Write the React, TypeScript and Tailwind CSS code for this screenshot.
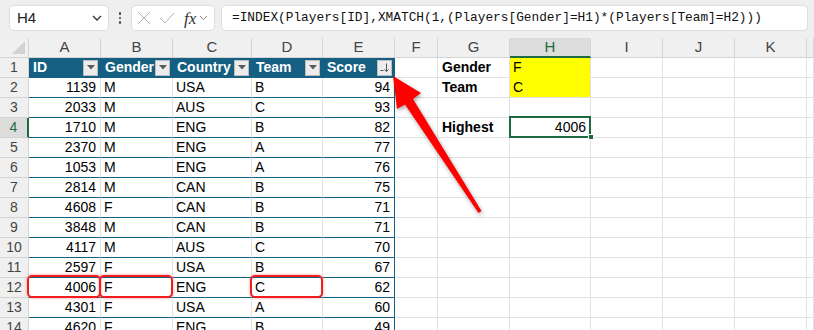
import React from "react";

const GRID =
  "grid grid-cols-[29px_72px_72px_79px_71px_72px_43px_72px_81px_72px_72px_72px_1fr] auto-rows-[20px]";

const letters = ["A", "B", "C", "D", "E", "F", "G", "H", "I", "J", "K", ""];
const headers = ["ID", "Gender", "Country", "Team", "Score"];

const players: (string | number)[][] = [
  [1139, "M", "USA", "B", 94],
  [2033, "M", "AUS", "C", 93],
  [1710, "M", "ENG", "B", 82],
  [2370, "M", "ENG", "A", 77],
  [1053, "M", "ENG", "A", 76],
  [2814, "M", "CAN", "B", 75],
  [4608, "F", "CAN", "B", 71],
  [3848, "M", "CAN", "B", 71],
  [4117, "M", "AUS", "C", 70],
  [2597, "F", "USA", "B", 67],
  [4006, "F", "ENG", "C", 62],
  [4301, "F", "USA", "A", 60],
  [4620, "F", "ENG", "B", 49],
];

function FilterButton({ sort }: { sort?: boolean }) {
  return (
    <span className="ml-auto flex h-[16px] w-[15px] shrink-0 items-center justify-center border border-[#bdbdbd] bg-[#ececec]">
      {sort ? (
        <svg width="11" height="11" viewBox="0 0 11 11">
          <path d="M1.5 8.5h3" stroke="#555" strokeWidth="1" />
          <path d="M7.5 1.5v8M5.5 7.5l2 2 2-2" stroke="#555" strokeWidth="1" fill="none" />
        </svg>
      ) : (
        <svg width="8" height="5" viewBox="0 0 8 5">
          <path d="M0 0h8L4 4.5z" fill="#5a5a5a" />
        </svg>
      )}
    </span>
  );
}

function RedBox() {
  return (
    <span className="pointer-events-none absolute left-[-2px] right-[-1px] top-[-3px] bottom-[-1px] rounded-[5px] border-2 border-[#f01e1e] shadow-[0_0_3px_rgba(240,30,30,0.45)]" />
  );
}

function tableCell(r: number, c: number) {
  if (r === 1) {
    const sort = c === 4;
    return (
      <div
        key={`${r}-${c}`}
        className="flex items-center border-r border-b border-r-[#156082] border-b-[#156082] bg-[#156082] pl-[4px] pr-[2px] text-[14px] font-bold whitespace-nowrap text-white"
      >
        <span>{headers[c]}</span>
        <FilterButton sort={sort} />
      </div>
    );
  }
  const v = players[r - 2][c];
  const numeric = c === 0 || c === 4;
  const boxed = r === 12 && (c === 0 || c === 1 || c === 3);
  return (
    <div
      key={`${r}-${c}`}
      className={
        (c === 4 ? "border-r-[#156082] " : "border-r-[#e1e1e1] ") +
        (numeric ? "justify-end pr-[4px] " : "justify-start pl-[3px] ") +
        "relative flex items-center border-r border-b border-b-[#156082] text-[14px] whitespace-nowrap text-black"
      }
    >
      {v}
      {boxed && <RedBox />}
    </div>
  );
}

function sideCell(r: number, c: number) {
  const key = `${r}-${c}`;
  if (c === 6) {
    const label = r === 1 ? "Gender" : r === 2 ? "Team" : r === 4 ? "Highest" : "";
    return (
      <div
        key={key}
        className="flex items-center border-r border-b border-r-[#e1e1e1] border-b-[#e1e1e1] pl-[4px] text-[14px] font-bold text-black"
      >
        {label}
      </div>
    );
  }
  if (c === 7 && r === 1) {
    return (
      <div key={key} className="flex items-center border-r border-b border-r-[#e1e1e1] border-b-[#ffff00] bg-[#ffff00] pl-[3px] text-[14px] text-black">
        F
      </div>
    );
  }
  if (c === 7 && r === 2) {
    return (
      <div key={key} className="flex items-center border-r border-b border-r-[#e1e1e1] border-b-[#e1e1e1] bg-[#ffff00] pl-[3px] text-[14px] text-black">
        C
      </div>
    );
  }
  if (c === 7 && r === 4) {
    return (
      <div key={key} className="relative flex items-center justify-end border-r border-b border-r-[#e1e1e1] border-b-[#e1e1e1] pr-[4px] text-[14px] text-black">
        4006
        <span className="pointer-events-none absolute left-[-1px] right-[-1px] top-[-2px] bottom-[-1px] border-2 border-[#1e6b41]" />
        <span className="absolute right-[-4px] bottom-[-3px] h-[6px] w-[6px] border border-white bg-[#1e6b41]" />
      </div>
    );
  }
  return <div key={key} className="border-r border-b border-r-[#e1e1e1] border-b-[#e1e1e1]" />;
}

function Toolbar() {
  return (
    <div className="flex h-[38px] items-start gap-0 bg-[#efefef] pt-[5px]">
      <div className="ml-[9px] flex h-[26px] w-[100px] items-center rounded-[5px] border border-[#dedede] bg-white pl-[7px] pr-[6px]">
        <span className="text-[15px] text-[#222]">H4</span>
        <svg className="ml-auto" width="10" height="6" viewBox="0 0 10 6">
          <path d="M1 1l4 4 4-4" stroke="#333" strokeWidth="1.3" fill="none" />
        </svg>
      </div>
      <div className="flex h-[26px] w-[22px] flex-col items-center justify-center gap-[2px]">
        <span className="h-[2.5px] w-[2.5px] rounded-full bg-[#444]" />
        <span className="h-[2.5px] w-[2.5px] rounded-full bg-[#444]" />
        <span className="h-[2.5px] w-[2.5px] rounded-full bg-[#444]" />
      </div>
      <div className="flex h-[26px] w-[84px] items-center rounded-[5px] border border-[#dedede] bg-white pl-[5px]">
        <svg width="14" height="14" viewBox="0 0 14 14">
          <path d="M1 1l12 12M13 1L1 13" stroke="#b3b3b3" strokeWidth="1" />
        </svg>
        <svg className="ml-[8px]" width="16" height="12" viewBox="0 0 16 12">
          <path d="M1 6l5 5L15 1" stroke="#b3b3b3" strokeWidth="1" fill="none" />
        </svg>
        <span className="ml-[9px] font-['Liberation_Serif',serif] text-[17px] italic leading-none text-[#333]">fx</span>
        <svg className="ml-[3px]" width="9" height="6" viewBox="0 0 9 6">
          <path d="M1 1l3.5 3.5L8 1" stroke="#888" strokeWidth="1" fill="none" />
        </svg>
      </div>
      <div className="ml-[6px] flex h-[26px] w-[587px] items-center rounded-[5px] border border-[#dedede] bg-white pl-[10px]">
        <span className="font-['Liberation_Mono',monospace] text-[12.8px] whitespace-nowrap text-[#111]">
          =INDEX(Players[ID],XMATCH(1,(Players[Gender]=H1)*(Players[Team]=H2)))
        </span>
      </div>
    </div>
  );
}

export default function App() {
  const rows = Array.from({ length: 14 }, (_, i) => i + 1);
  return (
    <div className="relative h-[330px] w-[814px] overflow-hidden bg-white font-['Liberation_Sans',Arial,sans-serif]">
      <Toolbar />
      <div className={GRID}>
        <div className="relative border-r border-b border-r-[#d4d4d4] border-b-[#d4d4d4] bg-[#f0f0f0]">
          <svg className="absolute right-[3px] bottom-[3px]" width="13" height="13" viewBox="0 0 13 13">
            <path d="M13 0V13H0z" fill="#d2d2d2" />
          </svg>
        </div>
        {letters.map((l) =>
          l === "H" ? (
            <div key={l} className="flex items-center justify-center border-r border-b-2 border-r-[#d4d4d4] border-b-[#1e6b41] bg-[#dcdcdc] text-[15px] text-[#1e6b41]">
              {l}
            </div>
          ) : (
            <div key={l || "L"} className="flex items-center justify-center border-r border-b border-r-[#d4d4d4] border-b-[#d4d4d4] bg-[#f0f0f0] text-[15px] text-[#444]">
              {l}
            </div>
          )
        )}
        {rows.map((r) => (
          <React.Fragment key={r}>
            {r === 4 ? (
              <div className="flex items-center justify-center border-r-2 border-b border-r-[#1e6b41] border-b-[#d4d4d4] bg-[#dcdcdc] text-[14px] text-[#1e6b41]">
                {r}
              </div>
            ) : (
              <div className="flex items-center justify-center border-r border-b border-r-[#d4d4d4] border-b-[#d4d4d4] bg-[#f0f0f0] text-[14px] text-[#444]">
                {r}
              </div>
            )}
            {[0, 1, 2, 3, 4].map((c) => tableCell(r, c))}
            {[5, 6, 7, 8, 9, 10, 11].map((c) => sideCell(r, c))}
          </React.Fragment>
        ))}
      </div>
      <svg
        className="pointer-events-none absolute left-0 top-0 drop-shadow-[1px_2px_2px_rgba(0,0,0,0.35)]"
        width="814"
        height="330"
        viewBox="0 0 814 330"
      >
        <path
          d="M393 76 L421 93 L413 99 L481.5 211 L478.5 213 L405 104.5 L397 109 Z"
          fill="#ff0000"
        />
      </svg>
    </div>
  );
}
